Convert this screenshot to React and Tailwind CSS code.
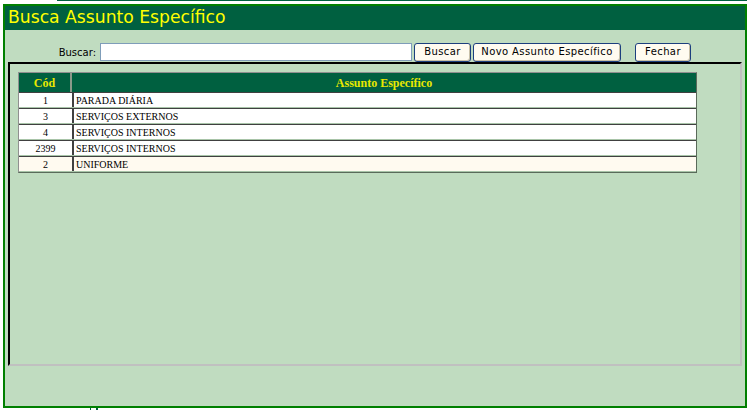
import React from 'react';

const rows = [
  { cod: '1', nome: 'PARADA DIÁRIA' },
  { cod: '3', nome: 'SERVIÇOS EXTERNOS' },
  { cod: '4', nome: 'SERVIÇOS INTERNOS' },
  { cod: '2399', nome: 'SERVIÇOS INTERNOS' },
  { cod: '2', nome: 'UNIFORME' },
];

function Botao({ children, className = '' }) {
  return (
    <button
      className={`h-[19px] rounded-[3px] border border-[#1c3f7e] bg-[#fffbf0] text-[10px] tracking-[0.4px] text-black leading-none shadow-[inset_-1px_-1px_0_#c8c0a8] ${className}`}
    >
      {children}
    </button>
  );
}

export default function App() {
  return (
    <div className="w-[747px] h-[410px] overflow-hidden bg-white" style={{ fontFamily: '"DejaVu Sans", Verdana, sans-serif' }}>
      {/* linha superior */}
      <div className="ml-[57px] h-px bg-[#006040]" />

      {/* janela */}
      <div className="mt-[3px] ml-[3px] w-[744px] h-[404px] border-2 border-[#008000] bg-[#c0dcc0] flex flex-col">
        <div className="h-[24px] shrink-0 bg-[#006040] pl-[3px] flex items-center">
          <span className="text-[17.2px] text-[#ffff00] leading-none">Busca Assunto Específico</span>
        </div>

        {/* busca */}
        <div className="mt-[13px] h-[18px] flex items-center">
          <span className="w-[91px] text-right text-[10px] text-black">Buscar:</span>
          <input className="ml-[4px] w-[312px] h-[18px] border border-[#7f9db9] bg-white outline-none" />
          <Botao className="ml-[2px] w-[57px]">Buscar</Botao>
          <Botao className="ml-[2px] w-[148px]">Novo Assunto Específico</Botao>
          <Botao className="ml-[14px] w-[56px]">Fechar</Botao>
        </div>

        {/* painel */}
        <div className="mt-px ml-[3px] w-[734px] h-[304px] border-2 border-t-black border-l-black border-b-[#c0c0c0] border-r-[#c0c0c0] pt-[8px] pl-[8px]">
          <div className="w-[679px] border border-[#909090] border-r-[#5a6a5a] border-b-[#5a6a5a]" style={{ fontFamily: '"Liberation Serif", "Times New Roman", serif' }}>
            <div className="h-[19px] flex bg-[#006040] text-[12px] font-bold text-[#e8e800]">
              <div className="w-[53px] flex items-center justify-center border-r-2 border-[#8a9a8a]">Cód</div>
              <div className="flex-1 flex items-center justify-center">Assunto Específico</div>
            </div>
            {rows.map((r, i) => (
              <div
                key={i}
                className={`h-[16px] flex border-t border-[#404040] border-b border-b-[#a8c4a8] text-[10px] text-black ${i === rows.length - 1 ? 'bg-[#fffaf0]' : 'bg-white'}`}
              >
                <div className="w-[53px] flex items-center justify-center">{r.cod}</div>
                <div className="flex-1 flex items-center pl-[2px] border-l-2 border-[#404040]">{r.nome}</div>
              </div>
            ))}
          </div>
        </div>
      </div>

      <div className="ml-[90px] flex gap-[5px]">
        <div className="w-px h-[2px] bg-[#006040]" />
        <div className="w-[2px] h-[2px] bg-[#006040]" />
      </div>
    </div>
  );
}
